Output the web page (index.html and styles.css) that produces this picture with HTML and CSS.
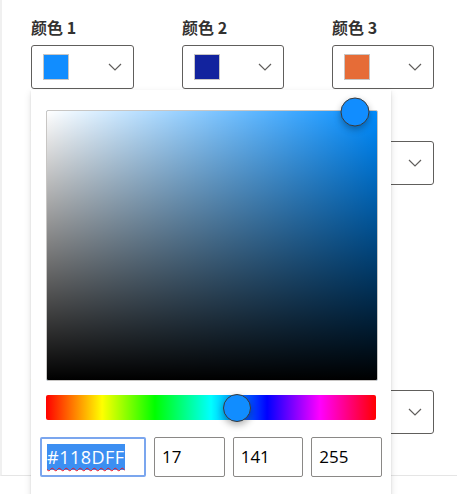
FILE: index.html
```html
<!DOCTYPE html>
<html lang="zh">
<head>
  <meta charset="UTF-8" />
  <meta name="viewport" content="width=device-width, initial-scale=1.0" />
  <title>颜色</title>
  <link rel="stylesheet" href="styles.css">
</head>
<body>
  <div class="page">
    <div class="row">
      <div class="field">
        <label>颜色 1</label>
        <div class="dropdown">
          <span class="swatch" style="background:#118DFF"></span>
          <svg class="chevron" width="14" height="8" viewBox="0 0 14 8"><path d="M1 1 L7 7 L13 1" /></svg>
        </div>
      </div>
      <div class="field">
        <label>颜色 2</label>
        <div class="dropdown">
          <span class="swatch" style="background:#12239E"></span>
          <svg class="chevron" width="14" height="8" viewBox="0 0 14 8"><path d="M1 1 L7 7 L13 1" /></svg>
        </div>
      </div>
      <div class="field">
        <label>颜色 3</label>
        <div class="dropdown">
          <span class="swatch" style="background:#E66C37"></span>
          <svg class="chevron" width="14" height="8" viewBox="0 0 14 8"><path d="M1 1 L7 7 L13 1" /></svg>
        </div>
      </div>
    </div>
    <div class="row">
      <div class="field">
        <label>颜色 4</label>
        <div class="dropdown">
          <span class="swatch" style="background:#6B007B"></span>
          <svg class="chevron" width="14" height="8" viewBox="0 0 14 8"><path d="M1 1 L7 7 L13 1" /></svg>
        </div>
      </div>
      <div class="field">
        <label>颜色 5</label>
        <div class="dropdown">
          <span class="swatch" style="background:#E044A7"></span>
          <svg class="chevron" width="14" height="8" viewBox="0 0 14 8"><path d="M1 1 L7 7 L13 1" /></svg>
        </div>
      </div>
      <div class="field">
        <label>颜色 6</label>
        <div class="dropdown">
          <span class="swatch" style="background:#744EC2"></span>
          <svg class="chevron" width="14" height="8" viewBox="0 0 14 8"><path d="M1 1 L7 7 L13 1" /></svg>
        </div>
      </div>
    </div>
    <div class="row far">
      <div class="field">
        <label>颜色 7</label>
        <div class="dropdown">
          <span class="swatch" style="background:#D9B300"></span>
          <svg class="chevron" width="14" height="8" viewBox="0 0 14 8"><path d="M1 1 L7 7 L13 1" /></svg>
        </div>
      </div>
      <div class="field">
        <label>颜色 8</label>
        <div class="dropdown">
          <span class="swatch" style="background:#D64550"></span>
          <svg class="chevron" width="14" height="8" viewBox="0 0 14 8"><path d="M1 1 L7 7 L13 1" /></svg>
        </div>
      </div>
      <div class="field">
        <label>颜色 9</label>
        <div class="dropdown">
          <span class="swatch" style="background:#197278"></span>
          <svg class="chevron" width="14" height="8" viewBox="0 0 14 8"><path d="M1 1 L7 7 L13 1" /></svg>
        </div>
      </div>
    </div>
  </div>

  <div class="picker">
    <div class="sat">
      <span class="thumb sat-thumb" style="left:93.3%; top:0%"></span>
    </div>
    <div class="hue">
      <span class="thumb hue-thumb" style="left:57.9%"></span>
    </div>
    <div class="inputs">
      <div class="input focused"><span class="selected">#118DFF</span></div>
      <div class="input">17</div>
      <div class="input">141</div>
      <div class="input">255</div>
    </div>
  </div>
</body>
</html>
```

FILE: styles.css
```css
* { box-sizing: border-box; margin: 0; padding: 0; }
body { background: white; color: #323130; font-family: 'Open Sans', 'Noto Sans CJK SC', sans-serif; overflow: hidden; }
.page { border-left: 2px solid #f0f0f0; border-bottom: 1px solid #e5e5e5; padding: 15px 0 41px 29px; display: flex; flex-direction: column; gap: 22px; }
.row { display: grid; grid-template-columns: 103px 102px 102px; column-gap: 48px; }
.row.far { margin-top: 153px; }
.field label { display: block; font-family: 'Noto Sans CJK SC', sans-serif; font-weight: 600; font-size: 16px; line-height: 24px; margin-bottom: 6px; color: #323130; }
.dropdown { height: 44px; border: 1px solid #605e5c; border-radius: 3px; display: flex; align-items: center; justify-content: space-between; padding: 0 11px; }
.swatch { width: 26px; height: 26px; border: 1px solid #c8c6c4; }
.chevron path { fill: none; stroke: #605e5c; stroke-width: 1.2; }

.picker { position: absolute; left: 31px; top: 90px; width: 360px; height: 420px; background: white; padding: 20px 9px 0; box-shadow: 0 3.2px 7.2px rgba(0,0,0,0.13), 0 0.6px 1.8px rgba(0,0,0,0.11); }
.sat { position: relative; height: 271px; margin: 0 4px 0 6px; border: 1px solid #c8c6c4; border-radius: 2px;
  background: linear-gradient(to bottom, rgba(0,0,0,0), #000), linear-gradient(to right, #fff, rgba(255,255,255,0)), #008cff; }
.hue { position: relative; height: 25px; margin: 14px 6px 0; border-radius: 2px;
  background: linear-gradient(to right, #f00, #ff0 17%, #0f0 33%, #0ff 50%, #00f 67%, #f0f 83%, #f00); }
.thumb { position: absolute; border-radius: 50%; background: #118DFF; border: 1px solid #3b3a39; transform: translate(-50%, -50%); box-shadow: 0 3px 7px rgba(0,0,0,0.3); }
.sat-thumb { width: 29px; height: 29px; margin-top: 1px; }
.hue-thumb { width: 28px; height: 28px; top: 50%; }
.inputs { display: grid; grid-template-columns: 106px repeat(3, 1fr); gap: 8px; margin-top: 17px; }
.input { height: 40px; border: 1px solid #8a8886; border-radius: 2px; padding-left: 7px; font-size: 17px; line-height: 38px; color: #000; }
.input.focused { border: 2px solid #7ba6ee; padding-left: 5px; display: flex; align-items: center; }
.selected { background: #3c8ff2; color: white; font-size: 18px; letter-spacing: 0.5px; line-height: 26px; text-decoration: underline wavy #e81123; text-decoration-thickness: 1px; text-underline-offset: 3px; }
```
